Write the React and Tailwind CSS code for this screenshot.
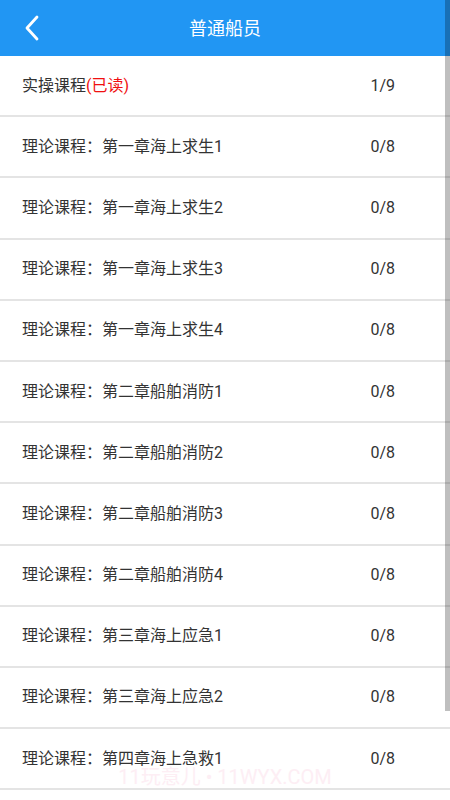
const rows = [
  { title: "实操课程", read: true, count: "1/9" },
  { title: "理论课程：第一章海上求生1", count: "0/8" },
  { title: "理论课程：第一章海上求生2", count: "0/8" },
  { title: "理论课程：第一章海上求生3", count: "0/8" },
  { title: "理论课程：第一章海上求生4", count: "0/8" },
  { title: "理论课程：第二章船舶消防1", count: "0/8" },
  { title: "理论课程：第二章船舶消防2", count: "0/8" },
  { title: "理论课程：第二章船舶消防3", count: "0/8" },
  { title: "理论课程：第二章船舶消防4", count: "0/8" },
  { title: "理论课程：第三章海上应急1", count: "0/8" },
  { title: "理论课程：第三章海上应急2", count: "0/8" },
  { title: "理论课程：第四章海上急救1", count: "0/8" },
];

export default function App() {
  return (
    <div
      className="relative min-h-screen bg-white"
      style={{ fontFamily: 'Roboto, "Noto Sans CJK SC", sans-serif' }}
    >
      {/* Header */}
      <div className="relative flex h-14 items-center justify-center bg-[#2196f3]">
        <button className="absolute left-[24px] top-0 flex h-14 items-center">
          <svg width="18" height="28" viewBox="0 0 18 28" fill="none">
            <polyline
              points="13,3 3,14 13,25"
              stroke="white"
              strokeWidth="2.8"
              strokeLinecap="round"
              strokeLinejoin="round"
            />
          </svg>
        </button>
        <h1 className="text-[18px] text-white">普通船员</h1>
      </div>

      {/* List */}
      <div>
        {rows.map((row, idx) => (
          <div
            key={idx}
            className="flex h-[61.2px] items-center justify-between border-b-2 border-[#e4e4e4] pl-[22px] pr-[55px] text-[16px] text-[#333333]"
          >
            <span>
              {row.title}
              {row.read && <span className="text-[#f01010]">(已读)</span>}
            </span>
            <span>{row.count}</span>
          </div>
        ))}
      </div>

      {/* Watermark */}
      <div className="pointer-events-none absolute left-0 right-0 top-[762px] text-center text-[20px] text-[#fdeef4]">
        11玩意儿 • 11WYX.COM
      </div>

      {/* Scrollbar */}
      <div className="absolute right-0 top-0 h-[711px] w-[5px] bg-black/25" />
    </div>
  );
}
